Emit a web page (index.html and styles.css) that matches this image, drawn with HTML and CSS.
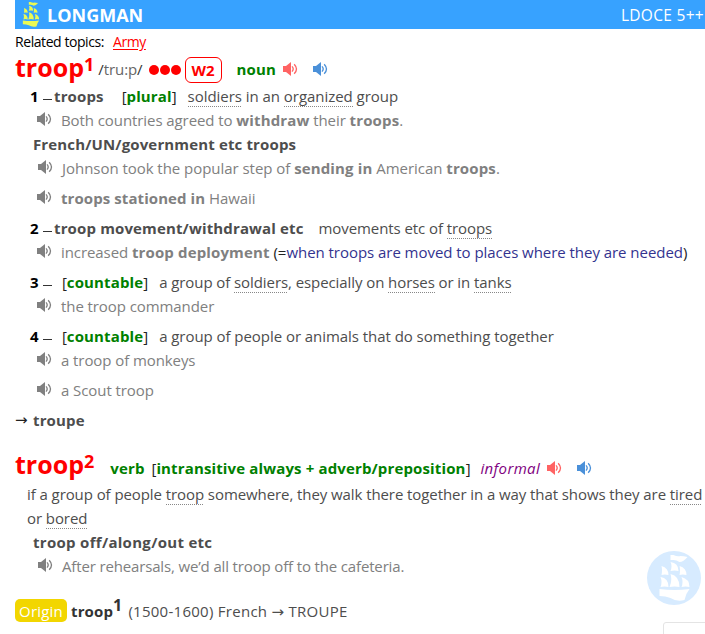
FILE: index.html
```html
<!DOCTYPE html>
<html lang="en">
<head>
<meta charset="utf-8">
<title>troop - LDOCE 5++</title>
<link rel="stylesheet" href="styles.css">
</head>
<body>
<svg class="defs" width="0" height="0" aria-hidden="true">
  <symbol id="speaker" viewBox="0 0 15 14">
    <path fill="currentColor" d="M0 4h3l5-4v14l-5-4H0z"/>
    <path fill="none" stroke="currentColor" stroke-width="1.3" d="M9 4.4Q11.4 7 9 9.6M11.2 2.2Q15.8 7 11.2 11.8"/>
  </symbol>
  <symbol id="ship" viewBox="0 0 30 46">
    <path fill="currentColor" d="M11 0h3q4 2 7 1 3 0 7 1-4 5-8 5-3-2-6-2h-3zM11 7q8 1 8 9-4-1-8 0 2-5 0-9zM2 11q7 2 7 9-4-1-7 0 1-5 0-9zM20 11q7 2 7 9-4-1-7 0 1-5 0-9zM1 22q8 1 8 10-4-1-8 0 2-5 0-10zM11 19q9 2 9 13-5-1-10 0 3-7 1-13zM22 22q8 2 8 10-4-1-8 0 2-5 0-10zM0 34q15 2 30 0-4 5-5 11-8 2-14-2-5-2-11-2z"/>
  </symbol>
</svg>
<header class="bar"><svg class="logo"><use href="#ship"/></svg><b class="brand">LONGMAN</b><span class="edition">LDOCE 5++</span></header>
<main>
  <div class="topics"><span>Related topics:</span><a class="topic">Army</a></div>
  <div class="head"><span class="word">troop<sup>1</sup></span><span class="pron">/<i>tru:p</i>/</span><span class="dots"><i></i><i></i><i></i></span><span class="freq">W2</span><span class="pos noun">noun</span><svg class="spk red"><use href="#speaker"/></svg><svg class="spk blue"><use href="#speaker"/></svg></div>

  <div class="row sense"><b class="num">1</b><i class="dash"></i><b class="lex">troops</b><span class="gram g-plural">[<b>plural</b>]</span><span class="def d-plural"><u>soldiers</u> in an <u>organized</u> group</span></div>
  <div class="row ex"><svg class="spk"><use href="#speaker"/></svg><span>Both countries agreed to <b>withdraw</b> their <b>troops</b>.</span></div>
  <div class="row colloc"><b>French/UN/government etc troops</b></div>
  <div class="row ex inset"><svg class="spk"><use href="#speaker"/></svg><span class="ex-long">Johnson took the popular step of <b>sending in</b> American <b>troops</b>.</span></div>
  <div class="row ex apart"><svg class="spk"><use href="#speaker"/></svg><span><b class="ex-lead">troops stationed in</b> Hawaii</span></div>

  <div class="row sense apart"><b class="num">2</b><i class="dash"></i><b class="lex">troop movement/withdrawal etc</b><span class="def d-move">movements etc of <u>troops</u></span></div>
  <div class="row ex"><svg class="spk"><use href="#speaker"/></svg><span>increased <b>troop deployment</b> <span class="paren">(=<em>when troops are moved to places where they are needed</em>)</span></span></div>

  <div class="row sense apart"><b class="num">3</b><i class="dash"></i><span class="gram g-count">[<b>countable</b>]</span><span class="def">a group of <u>soldiers</u>, especially on <u>horses</u> or in <u>tanks</u></span></div>
  <div class="row ex"><svg class="spk"><use href="#speaker"/></svg><span>the troop commander</span></div>

  <div class="row sense apart"><b class="num">4</b><i class="dash"></i><span class="gram g-count">[<b>countable</b>]</span><span class="def d-people">a group of people or animals that do something together</span></div>
  <div class="row ex"><svg class="spk"><use href="#speaker"/></svg><span>a troop of monkeys</span></div>
  <div class="row ex apart"><svg class="spk"><use href="#speaker"/></svg><span>a Scout troop</span></div>
  <div class="row see apart"><span class="arrow">→</span><b>troupe</b></div>

  <div class="head second"><span class="word">troop<sup>2</sup></span><span class="pos verb">verb</span><span class="gram g-verb">[<b>intransitive always + adverb/preposition</b>]</span><em class="reg">informal</em><svg class="spk red"><use href="#speaker"/></svg><svg class="spk blue"><use href="#speaker"/></svg></div>
  <div class="row para"><span>if a group of people <u>troop</u> somewhere, they walk there together in a way that shows they are <u>tired</u></span></div>
  <div class="row para"><span>or <u>bored</u></span></div>
  <div class="row colloc"><b class="c-off">troop off/along/out etc</b></div>
  <div class="row ex inset"><svg class="spk"><use href="#speaker"/></svg><span class="ex-after">After rehearsals, we’d all troop off to the cafeteria.</span></div>
  <div class="row origin"><span class="tag">Origin</span><b class="o-word">troop<sup>1</sup></b><span class="o-text">(1500-1600) French <span class="arr">→</span> TROUPE</span></div>
</main>
<div class="badge"><svg><use href="#ship"/></svg></div>
<div class="corner"></div>
</body>
</html>
```
FILE: styles.css
```css
* { box-sizing: border-box; }
html, body { height: 634px; overflow: hidden; }
body { margin: 0; background: #fff; color: #4d4d4d; font: 15px/24px "Open Sans", "Noto Sans", sans-serif; letter-spacing: -0.08px; position: relative; }
b { font-weight: 700; letter-spacing: 0.14px; }
.defs { position: absolute; }
svg { flex: none; }
.bar { height: 29px; margin-left: 15px; background: #37a2ff; color: #fff; display: flex; align-items: center; }
.logo { width: 18px; height: 25px; margin: 0 0 0 7px; color: #eafa54; }
.brand { font-size: 18px; margin: 0 0 0 7px; line-height: 28px; letter-spacing: 0; }
.edition { margin-left: auto; padding-right: 1px; font-size: 15.5px; letter-spacing: 0.3px; }
main { padding-left: 15px; white-space: nowrap; }
.topics { height: 26px; line-height: 26px; font-size: 14px; letter-spacing: -0.43px; color: #000; display: flex; }
.topic { color: red; margin-left: 9px; text-decoration: underline; text-underline-offset: 2px; }
.head { height: 29px; line-height: 29px; display: flex; align-items: center; }
.word { color: red; font-size: 25px; font-weight: 700; margin-bottom: 5px; letter-spacing: 0; }
.word sup { font-size: 18px; line-height: 0; vertical-align: 6px; }
.pron { color: #333; margin-left: 4px; }
.pron i { font-style: normal; color: #666; }
.dots { display: flex; gap: 1px; margin-left: 6px; }
.dots i { width: 10px; height: 10px; border-radius: 5px; background: red; }
.freq { width: 37px; height: 26px; line-height: 24px; border: 1px solid red; border-radius: 6px; margin-left: 4px; color: red; font-weight: 700; text-align: center; }
.pos { color: green; font-weight: 700; letter-spacing: 0.14px; }
.noun { margin-left: 15px; }
.spk { width: 15px; height: 14px; color: #808080; }
.red { color: #ff6363; margin: 0 0 1px 7px; }
.blue { color: #4a90d9; margin: 0 0 1px 15px; }
.row { height: 24px; display: flex; }
.apart { margin-top: 6px; }
.sense { padding-left: 15px; }
.num { color: #000; width: 13px; }
.dash { width: 9px; height: 1px; background: #333; margin-top: 15px; margin-right: 2px; }
.gram { color: #222; }
.gram b { color: green; }
.g-plural { margin-left: 18px; }
.g-count { margin-left: 8px; }
.def { margin-left: 11px; }
.d-plural { letter-spacing: -0.04px; }
.d-people { letter-spacing: -0.05px; }
.d-move { margin-left: 15px; }
u { text-decoration: none; padding-bottom: 1px; background: repeating-linear-gradient(90deg, #888 0 1px, transparent 1px 2px) 0 100% / 100% 1px no-repeat; }
.ex { padding-left: 22px; color: #808080; }
.ex .spk { margin: 4px 9px 0 0; }
.inset { padding-left: 23px; }
.ex-long { letter-spacing: -0.04px; }
.ex-lead { letter-spacing: 0.08px; }
.paren { color: #222; letter-spacing: -0.04px; }
.paren em { font-style: normal; color: #33338f; }
.colloc { padding-left: 18px; }
.c-off { letter-spacing: 0.3px; }
.arrow { color: #222; width: 18px; font: 15px/24px "DejaVu Sans", sans-serif; }
.arr { font-family: "DejaVu Sans", sans-serif; }
.second { margin-top: 22px; height: 28px; }
.second .word { margin-bottom: 8px; }
.verb { margin-left: 16px; }
.g-verb { margin-left: 7px; }
.reg { color: purple; margin-left: 10px; letter-spacing: 0.35px; }
.second .red { margin-left: 7px; }
.para { padding-left: 12px; }
.ex-after { letter-spacing: -0.15px; }
.origin { margin-top: 21px; }
.tag { width: 52px; height: 23px; border-radius: 5px; background: #f2d600; color: #fff; text-align: center; letter-spacing: 0.2px; }
.o-word { margin-left: 4px; color: #333; }
.o-word sup { font-size: 16px; line-height: 0; vertical-align: 6px; }
.o-text { margin-left: 6px; letter-spacing: 0.27px; }
.badge { position: absolute; left: 647px; top: 551px; width: 54px; height: 54px; border-radius: 50%; background: #d7ebff; color: #fff; display: flex; align-items: center; justify-content: center; }
.badge svg { width: 31px; height: 46px; }
.corner { position: absolute; left: 663px; top: 622px; width: 50px; height: 20px; border: 1px solid #e4e4e4; border-radius: 3px; }
```
